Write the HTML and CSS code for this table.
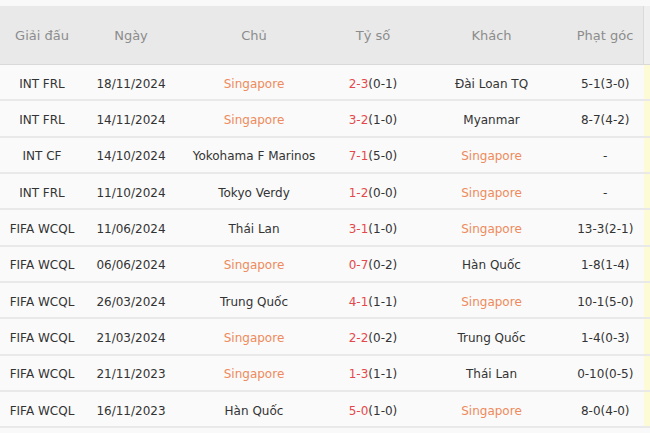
FILE: index.html
```html
<!DOCTYPE html>
<html lang="vi">
<head>
<meta charset="utf-8">
<link rel="stylesheet" href="styles.css">
</head>
<body>
<div class="wrap">
  <table class="tbl">
    <thead>
      <tr>
        <th class="c1">Giải đấu</th>
        <th class="c2">Ngày</th>
        <th class="c3">Chủ</th>
        <th class="c4">Tỷ số</th>
        <th class="c5">Khách</th>
        <th class="c6">Phạt góc</th>
        <th class="c7"></th>
      </tr>
    </thead>
    <tbody>
      <tr><td>INT FRL</td><td>18/11/2024</td><td class="sg">Singapore</td><td><span class="ft">2-3</span>(0-1)</td><td>Đài Loan TQ</td><td>5-1(3-0)</td><td class="c7"></td></tr>
      <tr><td>INT FRL</td><td>14/11/2024</td><td class="sg">Singapore</td><td><span class="ft">3-2</span>(1-0)</td><td>Myanmar</td><td>8-7(4-2)</td><td class="c7"></td></tr>
      <tr><td>INT CF</td><td>14/10/2024</td><td>Yokohama F Marinos</td><td><span class="ft">7-1</span>(5-0)</td><td class="sg">Singapore</td><td>-</td><td class="c7"></td></tr>
      <tr><td>INT FRL</td><td>11/10/2024</td><td>Tokyo Verdy</td><td><span class="ft">1-2</span>(0-0)</td><td class="sg">Singapore</td><td>-</td><td class="c7"></td></tr>
      <tr><td>FIFA WCQL</td><td>11/06/2024</td><td>Thái Lan</td><td><span class="ft">3-1</span>(1-0)</td><td class="sg">Singapore</td><td>13-3(2-1)</td><td class="c7"></td></tr>
      <tr><td>FIFA WCQL</td><td>06/06/2024</td><td class="sg">Singapore</td><td><span class="ft">0-7</span>(0-2)</td><td>Hàn Quốc</td><td>1-8(1-4)</td><td class="c7"></td></tr>
      <tr><td>FIFA WCQL</td><td>26/03/2024</td><td>Trung Quốc</td><td><span class="ft">4-1</span>(1-1)</td><td class="sg">Singapore</td><td>10-1(5-0)</td><td class="c7"></td></tr>
      <tr><td>FIFA WCQL</td><td>21/03/2024</td><td class="sg">Singapore</td><td><span class="ft">2-2</span>(0-2)</td><td>Trung Quốc</td><td>1-4(0-3)</td><td class="c7"></td></tr>
      <tr><td>FIFA WCQL</td><td>21/11/2023</td><td class="sg">Singapore</td><td><span class="ft">1-3</span>(1-1)</td><td>Thái Lan</td><td>0-10(0-5)</td><td class="c7"></td></tr>
      <tr><td>FIFA WCQL</td><td>16/11/2023</td><td>Hàn Quốc</td><td><span class="ft">5-0</span>(1-0)</td><td class="sg">Singapore</td><td>8-0(4-0)</td><td class="c7"></td></tr>
    </tbody>
  </table>
</div>
</body>
</html>
```
FILE: styles.css
```css
html, body {
  margin: 0;
  padding: 0;
  background: #f9f9f9;
}
body {
  font-family: "DejaVu Sans", Verdana, sans-serif;
  font-size: 12px;
  color: #333;
}
.wrap {
  padding-top: 6px;
  width: 650px;
}
.tbl {
  width: 650px;
  border-collapse: collapse;
  table-layout: fixed;
}
th {
  height: 58px;
  padding: 0;
  background: #e9e9e9;
  color: #8c8c8c;
  font-weight: normal;
  font-size: 13px;
  border-bottom: 1px solid #d9d9d9;
}
.c1 { width: 84px; }
.c2 { width: 94px; }
.c3 { width: 152px; }
.c4 { width: 86px; }
.c5 { width: 151px; }
.c6 { width: 76px; }
.c7 { width: 7px; }
th.c7 {
  background: #efefef;
  border-left: 1px solid #dadada;
}
td {
  height: 31.33px;
  padding: 3px 0 0;
  text-align: center;
  white-space: nowrap;
  background: #fafafa;
  border-bottom: 2px solid #e9e9e9;
}
td.c7 { background: #fdfad6; }
.sg { color: #ee8a5c; }
.ft { color: #e5484b; }
```
